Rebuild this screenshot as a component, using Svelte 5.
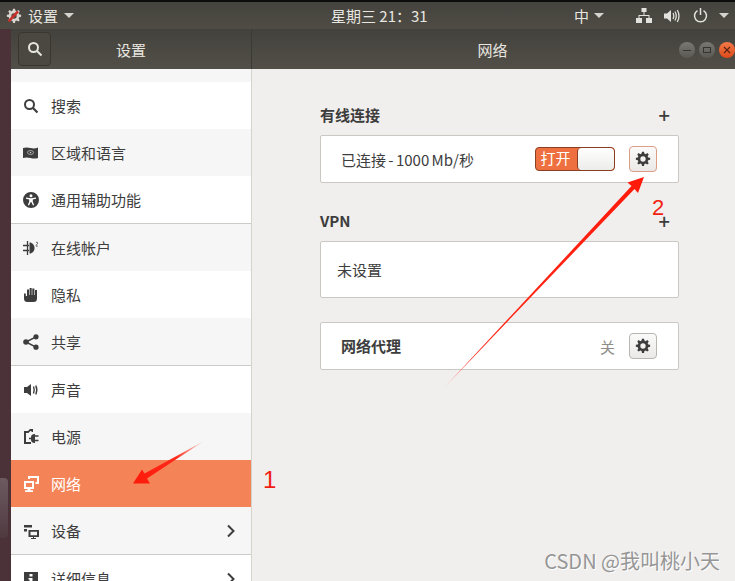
<script>
	const gear = "M10.500 1h3l.6 2.900 1.900.8 2.500-1.600 2.100 2.100-1.600 2.500.8 1.900 2.900.6v3l-2.900.6-.8 1.900 1.600 2.500-2.100 2.100-2.500-1.600-1.900.8-.6 2.900h-3l-.6-2.900-1.900-.8-2.500 1.600-2.100-2.100 1.600-2.500-.8-1.900-2.900-.6v-3l2.900-.6.8-1.900-1.600-2.500 2.100-2.100 2.500 1.600 1.900-.8zM12 8a4 4 0 1 0 0 8 4 4 0 0 0 0-8z";

	const rows = [
		{ id: "search", label: "搜索", tone: "white" },
		{ id: "region", label: "区域和语言", tone: "grey" },
		{ id: "access", label: "通用辅助功能", tone: "white", rule: true },
		{ id: "online", label: "在线帐户", tone: "grey" },
		{ id: "privacy", label: "隐私", tone: "white" },
		{ id: "share", label: "共享", tone: "grey", rule: true },
		{ id: "sound", label: "声音", tone: "white" },
		{ id: "power", label: "电源", tone: "grey" },
		{ id: "network", label: "网络", tone: "active" },
		{ id: "devices", label: "设备", tone: "grey", more: true, rule: true },
		{ id: "details", label: "详细信息", tone: "white", more: true }
	];
</script>

<div class="screen">
	<header class="topbar">
		<div class="topbar__left">
			<svg class="app-icon" width="16" height="16" viewBox="0 0 24 24">
				<path d={gear} fill="#d8d4d0" />
				<path d="M4 20L18 5" stroke="#c9302c" stroke-width="4" />
			</svg>
			<span>设置</span>
			<i class="caret"></i>
		</div>
		<div class="topbar__clock">星期三 21：31</div>
		<div class="topbar__right">
			<span class="ime">中</span>
			<i class="caret"></i>
			<svg class="tray-net" width="16" height="15" viewBox="0 0 16 15" fill="#e4e2dc">
				<rect x="5.500" y="0" width="5" height="4" />
				<rect x="0" y="10" width="6" height="5" />
				<rect x="10" y="10" width="6" height="5" />
				<path d="M7.500 4h1v3H13.500v3h-1V8h-9v2h-1V7H7.500z" />
			</svg>
			<svg class="tray-vol" width="16" height="14" viewBox="0 0 16 14" fill="#e4e2dc">
				<path d="M0 4.500h3L7 1v12L3 9.500H0z" />
				<path d="M9 4q1.500 3 0 6M11 2.500q2.500 4.500 0 9M13.300 1q3.400 6 0 12" fill="none" stroke="#e4e2dc" stroke-width="1.300" />
			</svg>
			<svg class="tray-power" width="15" height="15" viewBox="0 0 15 15" fill="none" stroke="#e4e2dc" stroke-width="1.500">
				<path d="M4.500 2.600a6 6 0 1 0 6 0M7.500 0v7" />
			</svg>
			<i class="caret"></i>
		</div>
	</header>

	<div class="desktop">
		<div class="wallpaper">
			<i class="dock-tile"></i>
		</div>
		<div class="window">
			<div class="titlebar">
				<div class="titlebar__side">
					<button class="search-btn" aria-label="搜索">
						<svg width="16" height="16" viewBox="0 0 16 16" fill="none" stroke="#e8e6e0" stroke-width="2">
							<circle cx="6.500" cy="6.500" r="4.500" />
							<path d="M10 10l4.500 4.500" />
						</svg>
					</button>
					<span class="titlebar__name">设置</span>
				</div>
				<div class="titlebar__main">
					<span class="titlebar__name">网络</span>
					<div class="controls">
						<i class="ctl"><b class="ctl__min"></b></i>
						<i class="ctl"><b class="ctl__max"></b></i>
						<i class="ctl ctl--close">
							<svg width="8" height="8" viewBox="0 0 8 8" stroke="#5a2410" stroke-width="1.200"><path d="M1 1l6 6M7 1L1 7" /></svg>
						</i>
					</div>
				</div>
			</div>

			<div class="body">
				<nav class="sidebar">
					<ul class="list">
						{#each rows as row}
							<li class="row row--{row.tone}" class:row--rule={row.rule}>
								<span class="row__icon">
									<svg width="16" height="16" viewBox="0 0 16 16" fill="currentColor">
										{#if row.id === "search"}
											<circle cx="6.500" cy="6.500" r="4.500" fill="none" stroke="currentColor" stroke-width="2" />
											<path d="M10 10l4.500 4.500" stroke="currentColor" stroke-width="2.200" />
										{:else if row.id === "region"}
											<path d="M0 3q3.500-1 7.500 0t7.500-.5v10.500q-3.500 1-7.500 0t-7.500 0z" />
											<ellipse cx="7.500" cy="7.500" rx="3" ry="2" fill="none" stroke="#c9c9c9" stroke-width=".7" />
											<circle cx="7.500" cy="7.500" r=".8" fill="#c9c9c9" />
										{:else if row.id === "access"}
											<path fill-rule="evenodd" d="M8 0a8 8 0 1 1 0 16A8 8 0 0 1 8 0zm0 2.300a1.500 1.500 0 1 0 0 3 1.500 1.500 0 0 0 0-3zM3 5.400v1.300l3.200.8v2.200L4.800 13l1.200.5L7.700 10h.6l1.700 3.500 1.200-.5-1.400-3.300V7.500l3.200-.8V5.400L8 6.300z" />
										{:else if row.id === "online"}
											<path d="M6.500 2.500c3 0 5 2.500 5 5.500s-2 5.500-5 5.500z" />
											<path d="M0 5.500h6M0 10.500h6" stroke="currentColor" stroke-width="1.300" />
											<path d="M4.500 1v14" stroke="currentColor" stroke-width="1.300" />
											<path d="M13 2.500c2-1 2 1 .8 2s-1 2.500 1 1.500" fill="none" stroke="currentColor" stroke-width=".8" />
										{:else if row.id === "privacy"}
											<path d="M1 6.500h1.800V9H4V2.500h2V8h.6V1h2.100v7h.6V1.500h2.100V8h.6V3h2v8.500q0 3.500-3.500 3.500H4.500Q1 15 1 11.500z" />
										{:else if row.id === "share"}
											<circle cx="3" cy="8" r="2.800" />
											<circle cx="13" cy="2.800" r="2.600" />
											<circle cx="13" cy="13.200" r="2.600" />
											<path d="M3 8l10-5.200M3 8l10 5.200" stroke="currentColor" stroke-width="1.500" />
										{:else if row.id === "sound"}
											<path d="M1 5h3l4-3v12l-4-3H1z" />
											<path d="M10.500 4.500q1.500 3.500 0 7M12.800 3.500q2 4.500 0 9" fill="none" stroke="currentColor" stroke-width="1.400" />
										{:else if row.id === "power"}
											<path d="M1 15V2h4l2-2h3v3H8.500v-1H7.400l-2 2H3v9h5v2z" />
											<path d="M8 8.500a3.500 3.500 0 0 1 3-3.500h1v9h-1a3.500 3.500 0 0 1-3-3.500z" />
											<path d="M6 9.500h2M12 7h3.500M12 11.500h3.500" stroke="currentColor" stroke-width="1.500" />
										{:else if row.id === "network"}
											<path fill-rule="evenodd" d="M1 5h10v8H7.500v1.200H10V16H2v-1.800h2.500V13H1zm2 2v4h6V7z" />
											<path d="M5 3V0h11v8h-3.500V6H14V2H7v1z" />
										{:else if row.id === "devices"}
											<path d="M1 2h8v2.500H1zM1 6h3v2.500H1z" />
											<path fill-rule="evenodd" d="M5.500 7H16v7H11v1h2v1H8v-1h2v-1H5.500zm2 1.800v3.400H14V8.800z" />
										{:else if row.id === "details"}
											<path fill-rule="evenodd" d="M1 1h14v14H1zm5.500 2v2.500h3V3zm-1 4v1.500h1v3.500h-1V14h5v-2h-1V7z" />
										{/if}
									</svg>
								</span>
								<span class="row__label">{row.label}</span>
								{#if row.more}
									<svg class="row__more" width="10" height="14" viewBox="0 0 10 14" fill="none" stroke="#3d3d3d" stroke-width="2">
										<path d="M2 1.500L7.500 7 2 12.500" />
									</svg>
								{/if}
							</li>
						{/each}
					</ul>
				</nav>

				<main class="content">
					<div class="section-head">
						<h2>有线连接</h2>
						<span class="plus">+</span>
					</div>
					<div class="card card--wired">
						<span class="card__text card__text--speed">已连接 - 1000 Mb/秒</span>
						<div class="switch">
							<span class="switch__on">打开</span>
							<span class="switch__knob"></span>
						</div>
						<button class="gear gear--hot" aria-label="设置">
							<svg width="16" height="16" viewBox="0 0 24 24" fill="#3d3d3d" fill-rule="evenodd"><path d={gear} /></svg>
						</button>
					</div>

					<div class="section-head section-head--vpn">
						<h2>VPN</h2>
						<span class="plus">+</span>
					</div>
					<div class="card card--vpn">
						<span class="card__text">未设置</span>
					</div>

					<div class="card card--proxy">
						<strong class="card__title">网络代理</strong>
						<span class="card__state">关</span>
						<button class="gear" aria-label="设置">
							<svg width="16" height="16" viewBox="0 0 24 24" fill="#3d3d3d" fill-rule="evenodd"><path d={gear} /></svg>
						</button>
					</div>
				</main>
			</div>
		</div>
	</div>

	<!-- screenshot annotations, drawn on top of the window -->
	<svg class="marks" width="735" height="581" viewBox="0 0 735 581">
		<defs>
			<linearGradient id="tail-a" gradientUnits="userSpaceOnUse" x1="442" y1="390" x2="642" y2="178">
				<stop offset="0" stop-color="#ff2a1a" stop-opacity="0.25" />
				<stop offset="0.15" stop-color="#ff2a1a" />
				<stop offset="1" stop-color="#ff1a0a" />
			</linearGradient>
			<linearGradient id="tail-b" gradientUnits="userSpaceOnUse" x1="204" y1="441" x2="134" y2="483">
				<stop offset="0" stop-color="#ff2a1a" stop-opacity="0.1" />
				<stop offset="0.4" stop-color="#ff2a1a" />
				<stop offset="1" stop-color="#ff1a0a" />
			</linearGradient>
		</defs>
		<path d="M442 390L631.500 186 627.500 182.500 644 177 638 193 634.500 189z" fill="url(#tail-a)" />
		<path d="M204 441L147 478.500 150 483.500 133 483.500 142 469.500 144.500 473.500z" fill="url(#tail-b)" />
	</svg>
	<span class="mark mark--one">1</span>
	<span class="mark mark--two">2</span>
	<span class="watermark">CSDN @我叫桃小天</span>
</div>

<style>
	:global(body) {
		margin: 0;
	}

	.screen {
		position: relative;
		display: flex;
		flex-direction: column;
		width: 735px;
		height: 581px;
		overflow: hidden;
		font-family: "Noto Sans CJK SC", "Noto Sans", sans-serif;
		background: #4b3238;
	}

	.topbar {
		flex: none;
		display: flex;
		align-items: center;
		justify-content: space-between;
		box-sizing: border-box;
		height: 29px;
		padding: 0 6px;
		border-top: 2px solid #0d0d0b;
		background: linear-gradient(#45433d, #4e4c45);
		color: #e8e6e0;
		font-size: 15px;
	}

	.topbar__left,
	.topbar__right {
		display: flex;
		align-items: center;
	}

	.topbar__left {
		gap: 6px;
	}

	.topbar__clock {
		position: absolute;
		left: 331px;
		top: 5px;
		line-height: 21px;
		font-size: 15px;
	}

	.topbar__right {
		margin-left: auto;
	}

	.caret {
		display: block;
		width: 0;
		height: 0;
		border-left: 5px solid transparent;
		border-right: 5px solid transparent;
		border-top: 5px solid #d5d3cd;
	}

	.ime {
		margin-right: 5px;
	}

	.tray-net {
		margin-left: 32px;
	}

	.tray-vol {
		margin-left: 12px;
	}

	.tray-power {
		margin-left: 13px;
		margin-right: 11px;
	}

	.desktop {
		flex: 1;
		display: flex;
		min-height: 0;
	}

	.wallpaper {
		position: relative;
		flex: none;
		width: 11px;
		background: #4b3238;
	}

	.dock-tile {
		position: absolute;
		left: 0;
		top: 449px;
		width: 8px;
		height: 60px;
		border-radius: 0 4px 4px 0;
		background: linear-gradient(#6d5a60, #4f3a40);
	}

	.window {
		flex: 1;
		display: flex;
		flex-direction: column;
		min-width: 0;
	}

	.titlebar {
		flex: none;
		display: flex;
		height: 40px;
		background: linear-gradient(#44423c, #514f48);
		color: #e8e6e0;
		font-size: 15px;
	}

	.titlebar__side {
		position: relative;
		display: flex;
		align-items: center;
		justify-content: center;
		box-sizing: border-box;
		width: 241px;
		border-right: 1px solid #3c3a35;
	}

	.titlebar__main {
		position: relative;
		flex: 1;
		display: flex;
		align-items: center;
		justify-content: center;
		padding-right: 2px;
	}

	.titlebar__name {
		font-size: 15px;
	}

	.search-btn {
		position: absolute;
		left: 7px;
		top: 3px;
		display: flex;
		align-items: center;
		justify-content: center;
		width: 33px;
		height: 34px;
		padding: 0;
		border: 1px solid #38362f;
		border-radius: 4px;
		background: #4a4841;
	}

	.controls {
		position: absolute;
		right: 0;
		top: 13px;
		display: flex;
		gap: 4px;
	}

	.ctl {
		display: flex;
		align-items: center;
		justify-content: center;
		width: 16px;
		height: 16px;
		border-radius: 50%;
		background: linear-gradient(#7a7872, #5a5852);
	}

	.ctl--close {
		background: linear-gradient(#f37a48, #de4a1a);
	}

	.ctl__min {
		display: block;
		width: 8px;
		height: 1px;
		background: #35332e;
	}

	.ctl__max {
		display: block;
		box-sizing: border-box;
		width: 8px;
		height: 6px;
		border: 1px solid #35332e;
	}

	.body {
		flex: 1;
		display: flex;
		min-height: 0;
	}

	.sidebar {
		flex: none;
		box-sizing: border-box;
		width: 241px;
		padding-top: 13px;
		border-right: 1px solid #d6d3ce;
		background: #f6f6f6;
		overflow: hidden;
	}

	.list {
		margin: 0;
		padding: 0;
		list-style: none;
	}

	.row {
		display: flex;
		align-items: center;
		box-sizing: border-box;
		height: 47px;
		padding-left: 12px;
		color: #3d3d3d;
		font-size: 15px;
	}

	.row--white {
		background: #fff;
	}

	.row--grey {
		background: #f6f6f6;
	}

	.row--active {
		background: #f58358;
		color: #fff;
	}

	.row--rule {
		height: 48px;
		border-bottom: 1px solid #cdcbc8;
	}

	.row__icon {
		display: flex;
		width: 28px;
	}

	.row__label {
		flex: 1;
	}

	.row__more {
		margin-right: 15px;
	}

	.content {
		flex: 1;
		box-sizing: border-box;
		padding: 36px 56px 0 68px;
		background: #f1efed;
		color: #3d3d3d;
		font-size: 15px;
	}

	.section-head {
		display: flex;
		align-items: center;
		justify-content: space-between;
		height: 20px;
		padding-right: 9px;
		margin-bottom: 10px;
	}

	.section-head--vpn {
		margin-top: 28px;
	}

	.section-head h2 {
		margin: -2px 0 0;
		font-size: 15px;
		font-weight: 600;
	}

	.plus {
		font-size: 20px;
		font-weight: 500;
		line-height: 20px;
	}

	.card {
		display: flex;
		align-items: center;
		box-sizing: border-box;
		border: 1px solid #cbc8c4;
		border-radius: 2px;
		background: #fff;
	}

	.card--wired {
		height: 48px;
		padding: 0 21px 0 20px;
	}

	.card--vpn {
		height: 57px;
		padding: 0 16px;
	}

	.card--proxy {
		height: 48px;
		margin-top: 24px;
		padding: 0 21px 0 20px;
	}

	.card__text {
		flex: 1;
	}

	.card__text--speed {
		word-spacing: -1px;
	}

	.card__title {
		flex: 1;
		margin-top: -2px;
		font-weight: 700;
	}

	.card__state {
		margin-right: 14px;
		color: #8e8c88;
	}

	.switch {
		display: flex;
		box-sizing: border-box;
		width: 80px;
		height: 24px;
		margin-right: 14px;
		border: 1px solid #8a3f22;
		border-radius: 4px;
		background: #ee6f3f;
		color: #fff;
		line-height: 20px;
		overflow: hidden;
	}

	.switch__on {
		width: 39px;
		margin-right: 2px;
		text-align: center;
		font-size: 15px;
	}

	.switch__knob {
		flex: 1;
		border-left: 1px solid #8a3f22;
		border-radius: 4px;
		background: linear-gradient(#fff, #ececea);
	}

	.gear {
		display: flex;
		align-items: center;
		justify-content: center;
		box-sizing: border-box;
		width: 28px;
		height: 26px;
		padding: 0;
		border: 1px solid #b9b6b1;
		border-radius: 4px;
		background: linear-gradient(#fafafa, #ebe9e7);
	}

	.gear--hot {
		border-color: #dc9d85;
	}

	.marks {
		position: absolute;
		left: 0;
		top: 0;
		pointer-events: none;
	}

	.mark {
		position: absolute;
		color: #f01f12;
		font-family: "Liberation Sans", sans-serif;
		line-height: 24px;
	}

	.mark--one {
		left: 263px;
		top: 468px;
		font-size: 24px;
	}

	.mark--two {
		left: 652px;
		top: 196px;
		font-size: 22px;
	}

	.watermark {
		position: absolute;
		right: 15px;
		top: 548px;
		color: #969696;
		font-size: 20px;
		line-height: 26px;
		text-shadow: 1px 1px 0 #fff;
	}
</style>
